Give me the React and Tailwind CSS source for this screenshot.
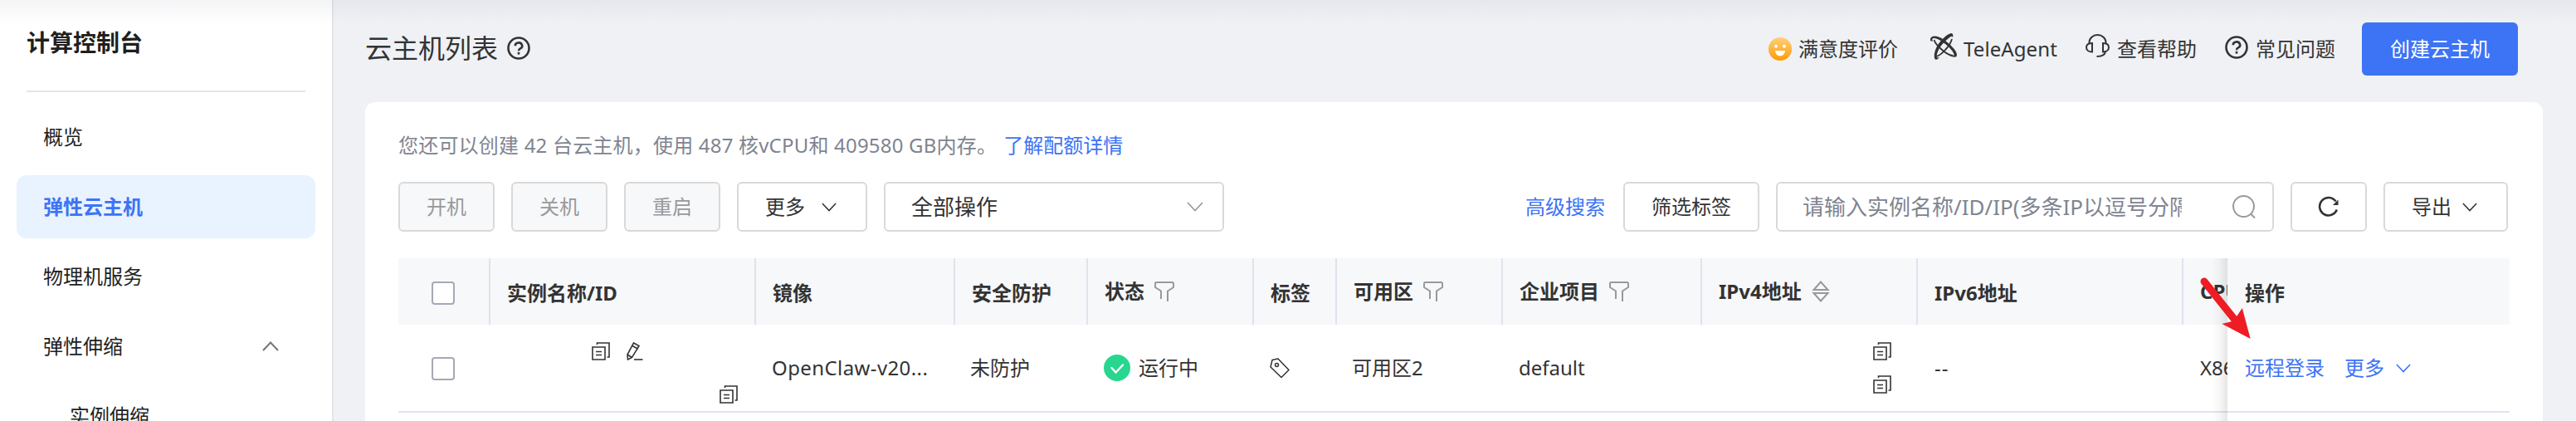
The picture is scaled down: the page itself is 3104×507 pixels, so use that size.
import React from 'react';

const sideItems = [
  { label: '概览' },
  { label: '弹性云主机', active: true },
  { label: '物理机服务' },
  { label: '弹性伸缩', open: true },
  { label: '实例伸缩', child: true },
];

function Chevron({ className, up }) {
  return (
    <svg className={className} viewBox="0 0 20 12" fill="none" stroke="currentColor" strokeWidth={up ? 2 : 1.7}>
      <path d={up ? 'M1 11 10 1.5 19 11' : 'M1 1 10 10.5 19 1'} />
    </svg>
  );
}

function HelpIcon({ className }) {
  return (
    <svg className={className} viewBox="0 0 28 28" fill="none" stroke="currentColor" strokeWidth="2.6">
      <circle cx="14" cy="14" r="12.5" />
      <path d="M9.800 11.2a4.200 3.7 0 1 1 6.200 3.2c-1.300.7-2 1.300-2 2.900" />
      <path d="M14 18.800v2.800" />
    </svg>
  );
}

function SmileIcon() {
  return (
    <svg className="w-7 h-7 shrink-0" viewBox="0 0 28 28">
      <defs>
        <linearGradient id="smile" x1="0" y1="0" x2="0" y2="1">
          <stop offset="0" stopColor="#ffd07a" />
          <stop offset="1" stopColor="#ff9a05" />
        </linearGradient>
      </defs>
      <circle cx="14" cy="14" r="14" fill="url(#smile)" />
      <circle cx="9" cy="10.7" r="2" fill="#fff" />
      <circle cx="19" cy="10.7" r="2" fill="#fff" />
      <path d="M8 16h12a6 6.4 0 0 1-12 0z" fill="#fff" />
    </svg>
  );
}

function AgentIcon() {
  return (
    <svg className="w-8 h-8 shrink-0" viewBox="0 0 32 32" fill="none" stroke="currentColor">
      <path d="M4.500 8c1 4 5 8 9 11.500 4.500 4 10 7.500 14 7.500" strokeWidth="1.800" />
      <path d="M26 7c-1.500 5-4 9-8 13-3.500 4-7.500 7-11 8" strokeWidth="1.800" />
      <path
        d="M0 9C-1 2 8 2 15 7c9 6 17 14 17 19 0 4-5 3-9 1 3 .5 6 1 5.500-1.500C27.500 21 20 14 14 10 9 6.500 4 5 2.500 6.500 2 7.500 2.500 8.500 3 10z"
        fill="currentColor"
        stroke="none"
      />
      <path
        d="M26.500 6c.5-2.500-.5-3-2.500-1.500C19 8 14 13 11 18c-2.500 4.500-4 9-3 11 .5 1 1.500.5 3-.5-2 3.500-5 4.500-6 1.500C4 25 6 19 9 14 13 8 20 1 25 0c2.500 0 3 3 1.500 6z"
        fill="currentColor"
        stroke="none"
      />
    </svg>
  );
}

function HeadsetIcon() {
  return (
    <svg className="w-[29px] h-7 shrink-0" viewBox="0 0 29 28" fill="none" stroke="currentColor" strokeWidth="2">
      <path d="M4.500 11V10a10 9 0 0 1 20 0v1" />
      <path d="M8 11v10.500C4 21.500 1 19.500 1 16s3-5 7-5z" />
      <path d="M21 11v10.500c4 0 7-2 7-5.500s-3-5-7-5z" />
      <path d="M24 20c0 5-3.500 7-10.500 7" />
    </svg>
  );
}

function CopyIcon() {
  return (
    <svg className="w-[22px] h-[22px] shrink-0" viewBox="0 0 22 22" fill="none" stroke="currentColor" strokeWidth="1.600">
      <path d="M1 6h15v15H1z" />
      <path d="M6.500 3V1H21v17h-2.500" />
      <path d="M5 11.500h7M5 15.500h7" />
    </svg>
  );
}

function EditIcon() {
  return (
    <svg className="w-5 h-[22px] shrink-0" viewBox="0 0 20 22" fill="none" stroke="currentColor" strokeWidth="1.600">
      <path d="M8.500 1 15 4.500 6.500 18.500 1.500 21 1 15z" />
      <path d="M7 4.500 13.500 8M1 15l5.500 3.500" />
      <path d="M9 21h10.500" />
    </svg>
  );
}

function FilterIcon() {
  return (
    <svg className="w-6 h-6 shrink-0 text-[#999]" viewBox="0 0 24 24" fill="none" stroke="currentColor" strokeWidth="2">
      <path d="M8 21V11.500L1 7V2.500Q1 1 2.500 1h19Q23 1 23 2.500V7l-7 4.500V24" />
    </svg>
  );
}

function SortIcon() {
  return (
    <svg className="w-[22px] h-7 shrink-0 text-[#999]" viewBox="0 0 22 28" fill="none" stroke="currentColor" strokeWidth="2">
      <path d="M11 2.500 2.500 12h17zM11 25.500 2.500 16h17z" />
    </svg>
  );
}

function TagIcon() {
  return (
    <svg className="w-6 h-6 shrink-0" viewBox="0 0 24 24" fill="none" stroke="currentColor" strokeWidth="1.500" strokeLinejoin="round">
      <path d="M3 2.500 10 1 23 14.500 14 23.500 1 11z" />
      <circle cx="8.500" cy="8.500" r="2" />
    </svg>
  );
}

function Checkbox() {
  return <span className="block w-7 h-7 rounded border-2 border-[#a5a9b5] bg-white" />;
}

function HeadCell({ className, children, icon }) {
  return (
    <div className={`h-full shrink-0 flex items-center pt-1 pl-5 border-r-2 border-[#e0e3ed] ${className}`}>
      <span className={icon ? 'mb-1' : ''}>{children}</span>
      {icon && <span className="ml-3 mb-1">{icon}</span>}
    </div>
  );
}

function Sidebar() {
  return (
    <aside className="w-[402px] h-full shrink-0 bg-white border-r-2 border-[#e3e4e6] overflow-hidden text-[#1f1f1f]">
      <div className="mx-8 h-[111px] border-b-2 border-[#e4e4e4]">
        <h1 className="h-[103px] flex items-center text-[28px] font-bold">计算控制台</h1>
      </div>
      <nav className="mt-4 flex flex-col gap-2 pl-5 pr-5">
        {sideItems.map((item) => (
          <div
            key={item.label}
            className={`h-[76px] shrink-0 flex items-center justify-between rounded-xl pr-11 ${
              item.child ? 'pl-16' : 'pl-8'
            } ${item.active ? 'bg-[#e8f3ff] text-[#3d73f5] font-bold' : ''}`}
          >
            <span>{item.label}</span>
            {item.open && <Chevron up className="w-5 h-3 text-[#777]" />}
          </div>
        ))}
      </nav>
    </aside>
  );
}

function Header() {
  return (
    <header className="h-[123px] shrink-0 flex items-start pl-[38px] pr-[70px]">
      <div className="h-[116px] flex items-center">
        <h2 className="text-[32px]">云主机列表</h2>
        <HelpIcon className="w-7 h-7 ml-[11px]" />
      </div>
      <div className="h-[118px] ml-auto flex items-center whitespace-nowrap">
        <SmileIcon />
        <span className="ml-2 w-[120px]">满意度评价</span>
        <span className="ml-[39px] mb-1.5 flex"><AgentIcon /></span>
        <span className="ml-2 w-[115px] tracking-[0.1px]">TeleAgent</span>
        <span className="ml-8 mb-2 flex"><HeadsetIcon /></span>
        <span className="ml-[9px] w-24">查看帮助</span>
        <HelpIcon className="w-7 h-7 ml-[34px] mb-1" />
        <span className="ml-[9px] w-24">常见问题</span>
        <button className="ml-8 w-[188px] h-16 rounded-md bg-[#3d73f5] text-white">创建云主机</button>
      </div>
    </header>
  );
}

function Toolbar() {
  return (
    <div className="h-[60px] flex gap-5 whitespace-nowrap">
      {['开机', '关机', '重启'].map((label) => (
        <button key={label} className="w-[116px] rounded-md border-2 border-[#d9d9d9] bg-[#f6f8fa] text-[#999]">
          {label}
        </button>
      ))}
      <button className="w-[157px] rounded-md border-2 border-[#d9d9d9] flex items-center pl-8">
        更多
        <Chevron className="w-[18px] h-[11px] ml-5" />
      </button>
      <div className="w-[410px] rounded-md border-2 border-[#d9d9d9] flex items-center justify-between pl-[31px] pr-[23px] text-[26px]">
        全部操作
        <Chevron className="w-5 h-3 text-[#999]" />
      </div>
      <div className="ml-auto mr-0.5 flex items-stretch gap-5">
        <a className="flex items-center text-[#3d73f5] mr-0.5">高级搜索</a>
        <button className="w-[164px] rounded-md border-2 border-[#d9d9d9]">筛选标签</button>
        <div className="w-[600px] rounded-md border-2 border-[#d9d9d9] flex items-center justify-between pl-[30px] pr-5 text-[26px] text-[#808490]">
          <span className="w-[457px] overflow-hidden">请输入实例名称/ID/IP(多条IP以逗号分隔)</span>
          <svg className="w-7 h-7 text-[#999]" viewBox="0 0 28 28" fill="none" stroke="currentColor" strokeWidth="2">
            <circle cx="13.500" cy="13.500" r="12.500" />
            <path d="m22 22.500 5 5" />
          </svg>
        </div>
        <button className="w-[92px] rounded-md border-2 border-[#d9d9d9] flex items-center justify-center">
          <svg className="w-[26px] h-[26px]" viewBox="0 0 26 26" fill="none" stroke="currentColor" strokeWidth="2.600">
            <path d="M22.800 16.500A10.700 10.700 0 1 1 21.500 6.500" />
            <path d="M24.500 4.500v6.500h-6.500z" fill="currentColor" stroke="none" />
          </svg>
        </button>
        <button className="w-[150px] rounded-md border-2 border-[#d9d9d9] flex items-center pl-8">
          导出
          <Chevron className="w-[18px] h-[11px] ml-[13px]" />
        </button>
      </div>
    </div>
  );
}

function InstanceTable() {
  return (
    <div className="relative mt-8 flex-1 flex overflow-hidden whitespace-nowrap">
      <div className="flex-1 min-w-0 overflow-hidden">
        <div className="h-20 flex bg-[#f6f8fa] font-bold">
          <div className="w-[111px] shrink-0 flex items-center pt-1 pl-10 border-r-2 border-[#e0e3ed]"><Checkbox /></div>
          <HeadCell className="w-[320px]">实例名称/ID</HeadCell>
          <HeadCell className="w-[240px]">镜像</HeadCell>
          <HeadCell className="w-[160px]">安全防护</HeadCell>
          <HeadCell className="w-[200px]" icon={<FilterIcon />}>状态</HeadCell>
          <HeadCell className="w-[100px]">标签</HeadCell>
          <HeadCell className="w-[200px]" icon={<FilterIcon />}>可用区</HeadCell>
          <HeadCell className="w-[240px]" icon={<FilterIcon />}>企业项目</HeadCell>
          <HeadCell className="w-[260px]" icon={<SortIcon />}>IPv4地址</HeadCell>
          <HeadCell className="w-[320px]">IPv6地址</HeadCell>
          <div className="flex-1 min-w-0 overflow-hidden flex items-center pl-5">CPU</div>
        </div>
        <div className="h-[106px] flex items-center border-b-2 border-[#e0e3ed]">
          <div className="w-[111px] shrink-0 pt-0.5 pl-10"><Checkbox /></div>
          <div className="w-[320px] shrink-0 pt-3 flex flex-col gap-[30px]">
            <div className="flex gap-5 pl-[122px]"><CopyIcon /><EditIcon /></div>
            <div className="pl-[276px]"><CopyIcon /></div>
          </div>
          <div className="w-[240px] shrink-0 pl-[19px] tracking-[0.4px]">OpenClaw-v20...</div>
          <div className="w-[160px] shrink-0 pl-[18px]">未防护</div>
          <div className="w-[200px] shrink-0 pl-[19px] flex items-center">
            <svg className="w-8 h-8 mr-2.5" viewBox="0 0 32 32">
              <circle cx="16" cy="16" r="16" fill="#27d68f" />
              <path d="m9.500 16 5 5.500 8.500-9" fill="none" stroke="#fff" strokeWidth="2.400" strokeLinecap="round" />
            </svg>
            运行中
          </div>
          <div className="w-[100px] shrink-0 pl-[19px]"><TagIcon /></div>
          <div className="w-[200px] shrink-0 pl-[18px]">可用区2</div>
          <div className="w-[240px] shrink-0 pl-[19px]">default</div>
          <div className="w-[260px] shrink-0 pl-[206px] flex flex-col gap-[18px]"><CopyIcon /><CopyIcon /></div>
          <div className="w-[320px] shrink-0 pl-5 tracking-[1px]">--</div>
          <div className="flex-1 min-w-0 overflow-hidden pl-5">X86</div>
        </div>
      </div>

      {/* pinned action column */}
      <div className="relative w-[340px] shrink-0 bg-white">
        <div className="absolute right-full top-0 bottom-0 w-5 bg-linear-to-l from-black/10 via-black/3 to-transparent" />
        <div className="h-20 flex items-center pt-1 pl-[21px] bg-[#f6f8fa] font-bold">操作</div>
        <div className="h-[106px] flex items-center pl-[21px] border-b-2 border-[#e0e3ed] text-[#3d73f5]">
          远程登录
          <span className="ml-6">更多</span>
          <Chevron className="w-[18px] h-[11px] ml-[14px]" />
        </div>
      </div>

      <svg className="absolute right-[310px] top-5 w-[66px] h-20" viewBox="2648 331 66 80">
        <path d="M2656 339 2692 384" stroke="#ee1c24" strokeWidth="9" strokeLinecap="round" />
        <path d="M2711.700 408 2701.800 371 2695.500 380.500 2689.500 387 2677.500 390z" fill="#ee1c24" />
      </svg>
    </div>
  );
}

export default function App() {
  return (
    <div className={`relative w-[3104px] h-[507px] flex overflow-hidden bg-[#eff1f5] text-2xl text-[#333] font-["Noto_Sans","Noto_Sans_CJK_SC",sans-serif]`}>
      <Sidebar />
      <main className="flex-1 min-w-0 h-full flex flex-col">
        <Header />
        <section className="ml-[38px] mr-10 flex-1 flex flex-col rounded-t-xl bg-white px-10">
          <p className="h-24 pt-2 flex items-center text-[#808490] whitespace-nowrap">
            <span className="tracking-[0.2px]">您还可以创建 42 台云主机，使用 487 核vCPU和 409580 GB内存。</span>
            <a className="ml-2 text-[#3d73f5]">了解配额详情</a>
          </p>
          <Toolbar />
          <InstanceTable />
        </section>
      </main>
      <div className="absolute inset-x-0 top-0 h-7 bg-linear-to-b from-[#1e2846]/5 to-transparent" />
    </div>
  );
}
